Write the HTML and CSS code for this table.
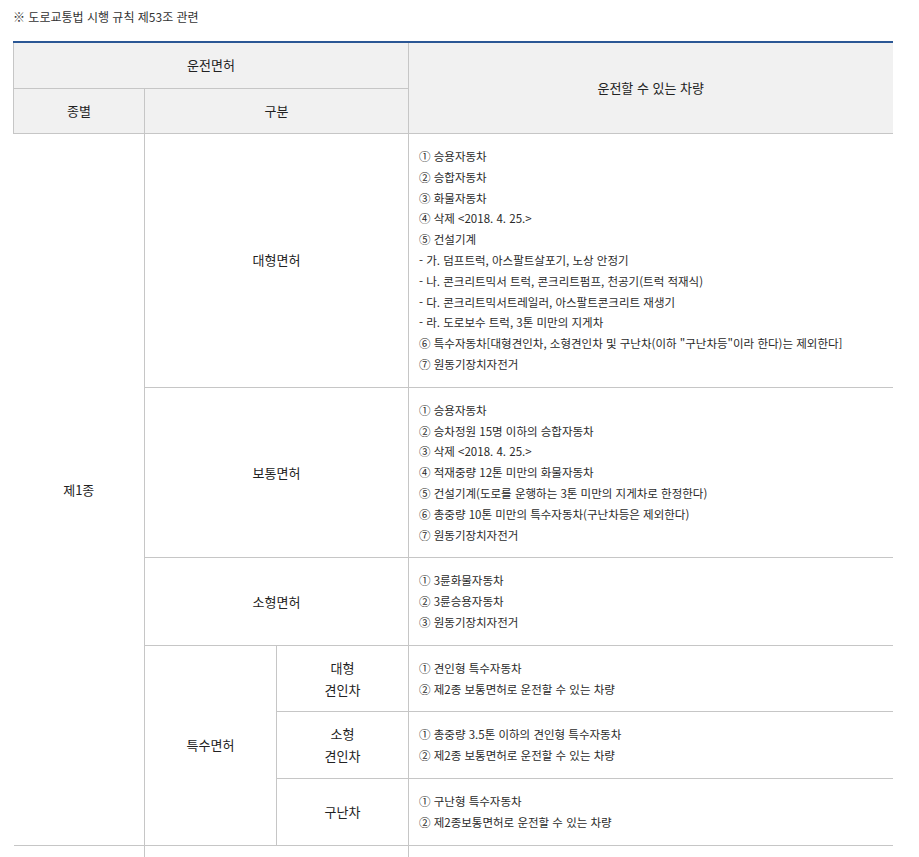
FILE: index.html
```html
<!DOCTYPE html>
<html lang="ko">
<head>
<meta charset="utf-8">
<title>운전면허</title>
<link rel="stylesheet" href="styles.css">
</head>
<body>
<div class="page">
  <p class="note">※ 도로교통법 시행 규칙 제53조 관련</p>
  <table class="lic">
    <colgroup>
      <col class="c1"><col class="c2"><col class="c3"><col class="c4">
    </colgroup>
    <thead>
      <tr>
        <th colspan="3" class="first">운전면허</th>
        <th rowspan="2">운전할 수 있는 차량</th>
      </tr>
      <tr>
        <th class="first">종별</th>
        <th colspan="2">구분</th>
      </tr>
    </thead>
    <tbody>
      <tr>
        <td rowspan="6" class="kind">제1종</td>
        <td colspan="2" class="label">대형면허</td>
        <td class="list">① 승용자동차<br>② 승합자동차<br>③ 화물자동차<br>④ 삭제 &lt;2018. 4. 25.&gt;<br>⑤ 건설기계<br>- 가. 덤프트럭, 아스팔트살포기, 노상 안정기<br>- 나. 콘크리트믹서 트럭, 콘크리트펌프, 천공기(트럭 적재식)<br>- 다. 콘크리트믹서트레일러, 아스팔트콘크리트 재생기<br>- 라. 도로보수 트럭, 3톤 미만의 지게차<br>⑥ 특수자동차[대형견인차, 소형견인차 및 구난차(이하 "구난차등"이라 한다)는 제외한다]<br>⑦ 원동기장치자전거</td>
      </tr>
      <tr>
        <td colspan="2" class="label">보통면허</td>
        <td class="list">① 승용자동차<br>② 승차정원 15명 이하의 승합자동차<br>③ 삭제 &lt;2018. 4. 25.&gt;<br>④ 적재중량 12톤 미만의 화물자동차<br>⑤ 건설기계(도로를 운행하는 3톤 미만의 지게차로 한정한다)<br>⑥ 총중량 10톤 미만의 특수자동차(구난차등은 제외한다)<br>⑦ 원동기장치자전거</td>
      </tr>
      <tr>
        <td colspan="2" class="label">소형면허</td>
        <td class="list">① 3륜화물자동차<br>② 3륜승용자동차<br>③ 원동기장치자전거</td>
      </tr>
      <tr>
        <td rowspan="3" class="label">특수면허</td>
        <td class="label">대형<br>견인차</td>
        <td class="list">① 견인형 특수자동차<br>② 제2종 보통면허로 운전할 수 있는 차량</td>
      </tr>
      <tr>
        <td class="label">소형<br>견인차</td>
        <td class="list">① 총중량 3.5톤 이하의 견인형 특수자동차<br>② 제2종 보통면허로 운전할 수 있는 차량</td>
      </tr>
      <tr>
        <td class="label">구난차</td>
        <td class="list">① 구난형 특수자동차<br>② 제2종보통면허로 운전할 수 있는 차량</td>
      </tr>
      <tr class="next">
        <td class="kind"></td>
        <td colspan="2" class="label"></td>
        <td class="list"></td>
      </tr>
    </tbody>
  </table>
</div>
</body>
</html>
```

FILE: styles.css
```css
html, body {
  margin: 0;
  padding: 0;
  background: #ffffff;
}

body {
  font-family: "Noto Sans CJK KR", "Noto Sans", sans-serif;
  color: #333333;
}

.page {
  padding: 9px 27px 0 13px;
}

.note {
  margin: 0;
  font-size: 12px;
  line-height: 16px;
  color: #333333;
}

.lic {
  margin-top: 16px;
  width: 879px;
  border-collapse: collapse;
  table-layout: fixed;
  border-top: 2px solid #2b5795;
}

.c1 { width: 131px; }
.c2 { width: 132px; }
.c3 { width: 132px; }
.c4 { width: 484px; }

.lic th {
  background: #f1f1f1;
  font-weight: normal;
  font-size: 13px;
  line-height: 20px;
  color: #222222;
  padding: 12px 0;
  border-bottom: 1px solid #c6c6c6;
  border-left: 1px solid #c6c6c6;
  text-align: center;
  vertical-align: middle;
}

.lic th.first {
  border-left: 1px solid #c6c6c6;
}

.lic thead tr:first-child th {
  height: 20px;
  padding: 12px 0 13px;
}

.lic td {
  border-bottom: 1px solid #c6c6c6;
  border-left: 1px solid #c6c6c6;
  vertical-align: middle;
}

.lic td.kind {
  border-left: none;
  text-align: center;
  font-size: 13px;
  line-height: 21px;
  color: #222222;
}

.lic td.label {
  text-align: center;
  font-size: 13px;
  line-height: 22px;
  color: #222222;
}

.lic td.list {
  font-size: 11.5px;
  line-height: 20.8px;
  color: #2a2a2a;
  padding: 12px 10px 12px 10px;
  text-align: left;
}

.lic tr.next td {
  height: 60px;
  border-bottom: none;
}

.lic tr.next td.kind {
  border-left: none;
}
```
